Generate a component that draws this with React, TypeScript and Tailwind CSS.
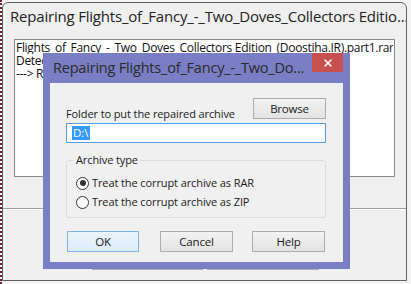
import { X } from 'lucide-react'

const ui = "font-['Open_Sans',sans-serif]"

const WinButton = ({ label, className = '' }: { label: string; className?: string }) => (
  <button
    className={`h-[21px] border border-[#acacac] bg-gradient-to-b from-[#f2f2f2] to-[#e3e3e3] text-[11.5px] tracking-[-0.2px] text-[#1a1a1a] leading-none ${className}`}
  >
    {label}
  </button>
)

const Radio = ({ checked, label }: { checked?: boolean; label: string }) => (
  <div className="flex items-center gap-[3px]">
    <span className="flex h-[13px] w-[13px] items-center justify-center rounded-full border border-[#333] bg-white">
      {checked && <span className="h-[6px] w-[6px] rounded-full bg-[#333]" />}
    </span>
    <span className="text-[11px] tracking-[-0.1px] text-[#1a1a1a] leading-[16px]">{label}</span>
  </div>
)

const OuterWindow = () => (
  <div className="ml-[2px] mt-[2px] flex h-[279px] w-[405px] flex-col rounded-t-[6px] border border-[#5f5f5f] bg-[#efefef]">
    <div className="flex h-[36px] items-start pl-[7px] pt-[2px] text-[15px] tracking-[-0.2px] text-[#222] whitespace-nowrap overflow-hidden">
      Repairing Flights_of_Fancy_-_Two_Doves_Collectors Editio...
    </div>
    <div className="ml-[11px] h-[138px] w-[381px] border border-[#8a8a8a] bg-white px-[1px] pt-[1px] text-[12px] tracking-[-0.3px] leading-[13px] text-[#111]">
      <div className="h-[13px] overflow-hidden whitespace-nowrap">
        Flights_of_Fancy_-_Two_Doves_Collectors Edition_(Doostiha.IR).part1.rar
      </div>
      <div className="h-[13px] overflow-hidden whitespace-nowrap">Detected a corrupt archive</div>
      <div className="h-[13px] overflow-hidden whitespace-nowrap">---&gt; Repairing</div>
    </div>
    <div className="mt-[31px] h-[2px] border-t border-[#a0a0a0] bg-white" />
    <div className="mt-[36px] flex gap-[4px] pl-[89px]">
      <div className="h-[24px] w-[111px] border border-[#acacac] bg-[#e6e6e6]" />
      <div className="h-[24px] w-[112px] border border-[#acacac] bg-[#e6e6e6]" />
    </div>
  </div>
)

const RepairDialog = () => (
  <div className="absolute left-[43px] top-[53px] flex h-[216px] w-[307px] flex-col bg-[#7a7ec4]">
    <div className="relative h-[30px] shrink-0">
      <div className="pl-[10px] pt-[4px] text-[14.5px] tracking-[-0.2px] text-[#2a2a2a] whitespace-nowrap">
        Repairing Flights_of_Fancy_-_Two_Do...
      </div>
      <div className="absolute right-[7px] top-0 flex h-[19px] w-[31px] items-center justify-center bg-[#c75050]">
        <X className="h-[12px] w-[12px] text-white" strokeWidth={3} />
      </div>
    </div>
    <div className="mx-[7px] flex h-[179px] flex-col bg-[#f0f0f0] px-[16px] pt-[15px]">
      <div className="flex w-[260px] items-end justify-between">
        <span className="mb-[-3px] text-[11px] tracking-[-0.1px] leading-[16px] text-[#1a1a1a]">
          Folder to put the repaired archive
        </span>
        <WinButton label="Browse" className="w-[73px]" />
      </div>
      <div className="mt-[4px] flex h-[20px] w-[260px] items-center border border-[#569de5] bg-white px-[5px]">
        <span className="bg-[#3399ff] px-[1px] text-[11.5px] leading-[14px] text-white">D:\</span>
      </div>
      <div className="relative mt-[17px] h-[58px] w-[260px] rounded-[3px] border border-[#dcdcdc] pl-[9px] pt-[14px]">
        <span className="absolute -top-[9px] left-[7px] bg-[#f0f0f0] px-[2px] text-[11px] tracking-[-0.1px] leading-[16px] text-[#1a1a1a]">
          Archive type
        </span>
        <div className="flex flex-col gap-[3px]">
          <Radio checked label="Treat the corrupt archive as RAR" />
          <Radio label="Treat the corrupt archive as ZIP" />
        </div>
      </div>
      <div className="mt-[13px] flex">
        <WinButton
          label="OK"
          className="ml-[1px] w-[72px] !border-[#7eb4ea] !from-[#ecf4fc] !to-[#dcecfc]"
        />
        <WinButton label="Cancel" className="ml-[21px] w-[73px]" />
        <WinButton label="Help" className="ml-[19px] w-[73px]" />
      </div>
    </div>
  </div>
)

export default function App() {
  return (
    <div className={`relative h-[284px] w-[411px] overflow-hidden bg-[#f4f4f4] ${ui}`}>
      <div className="absolute left-0 top-0 h-full w-[2px] border-l-2 border-dotted border-[#6b2035]" />
      <OuterWindow />
      <RepairDialog />
    </div>
  )
}
